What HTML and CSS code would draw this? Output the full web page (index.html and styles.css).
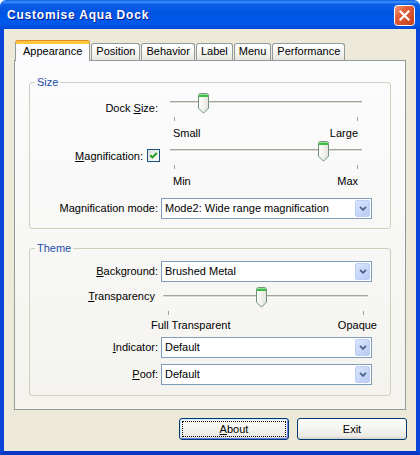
FILE: index.html
```html
<!DOCTYPE html>
<html lang="en">

<head>
    <meta charset="UTF-8">
    <meta name="viewport" content="width=device-width, initial-scale=1.0">
    <title>Customise Aqua Dock</title>
    <link rel="stylesheet" href="styles.css">
</head>

<body>
    <div class="window">
        <!-- title bar -->
        <div class="titlebar">
            <span class="title">Customise Aqua Dock</span>
            <a href="javascript:;" class="close-btn">
                <svg width="21" height="21" viewBox="0 0 21 21">
                    <defs>
                        <linearGradient id="close-bg" x1="0" y1="0" x2="1" y2="1">
                            <stop offset="0" stop-color="#f1a187" />
                            <stop offset=".35" stop-color="#e3603a" />
                            <stop offset="1" stop-color="#c23c18" />
                        </linearGradient>
                    </defs>
                    <rect x=".5" y=".5" width="20" height="20" rx="3" fill="url(#close-bg)" stroke="#fff" />
                    <path d="M6.5 6.5L14.5 14.5M14.5 6.5L6.5 14.5" stroke="#fff" stroke-width="2.2" stroke-linecap="square" />
                </svg>
            </a>
        </div>

        <div class="frame">
            <ul class="tabs">
                <li class="tab active">Appearance</li>
                <li class="tab">Position</li>
                <li class="tab">Behavior</li>
                <li class="tab">Label</li>
                <li class="tab">Menu</li>
                <li class="tab">Performance</li>
            </ul>

            <div class="panel">
                <!-- Size -->
                <fieldset class="group group-size">
                    <legend>Size</legend>

                    <div class="row row-slider">
                        <label class="row-label">Dock <u>S</u>ize:</label>
                        <div class="slider">
                            <div class="track-area">
                                <div class="track"></div>
                                <span class="thumb" style="left: 28px">
                                    <svg width="11" height="21" viewBox="0 0 11 21">
                                        <defs>
                                            <linearGradient id="thumb-bg" x1="0" x2="1">
                                                <stop offset="0" stop-color="#ffffff" />
                                                <stop offset="1" stop-color="#e4e4dc" />
                                            </linearGradient>
                                        </defs>
                                        <path d="M.5 2.5Q.5 .5 2.5 .5H8.5Q10.5 .5 10.5 2.5V15.2L5.5 20.2L.5 15.2Z" fill="url(#thumb-bg)" stroke="#72917a" />
                                        <rect x="1" y="1" width="9" height="1" fill="#95e395" />
                                        <rect x="1" y="2" width="9" height="2" fill="#3fb947" />
                                    </svg>
                                </span>
                            </div>
                            <div class="ticks"><i></i><i></i></div>
                            <div class="scale"><span>Small</span><span>Large</span></div>
                        </div>
                    </div>

                    <div class="row row-slider row-magnify">
                        <label class="row-label">
                            <u>M</u>agnification:
                        </label>
                        <span class="checkbox">
                            <svg width="13" height="13" viewBox="0 0 13 13">
                                <defs>
                                    <linearGradient id="check-bg" x1="0" y1="0" x2="1" y2="1">
                                        <stop offset="0" stop-color="#dcdcd7" />
                                        <stop offset="1" stop-color="#ffffff" />
                                    </linearGradient>
                                </defs>
                                <rect x=".5" y=".5" width="12" height="12" fill="url(#check-bg)" stroke="#1c5180" />
                                <path d="M3.2 6.2L5.4 8.4L9.8 4" fill="none" stroke="#21a121" stroke-width="2" />
                            </svg>
                        </span>
                        <div class="slider">
                            <div class="track-area">
                                <div class="track"></div>
                                <span class="thumb" style="left: 148px">
                                    <svg width="11" height="21" viewBox="0 0 11 21">
                                        <path d="M.5 2.5Q.5 .5 2.5 .5H8.5Q10.5 .5 10.5 2.5V15.2L5.5 20.2L.5 15.2Z" fill="url(#thumb-bg)" stroke="#72917a" />
                                        <rect x="1" y="1" width="9" height="1" fill="#95e395" />
                                        <rect x="1" y="2" width="9" height="2" fill="#3fb947" />
                                    </svg>
                                </span>
                            </div>
                            <div class="ticks"><i></i><i></i></div>
                            <div class="scale"><span>Min</span><span>Max</span></div>
                        </div>
                    </div>

                    <div class="row row-select row-mode">
                        <label class="row-label">Ma<u>g</u>nification mode:</label>
                        <div class="select">
                            <span class="select-text">Mode2: Wide range magnification</span>
                            <span class="select-btn">
                                <svg width="8" height="5" viewBox="0 0 8 5">
                                    <path d="M1 .8L4 3.8L7 .8" fill="none" stroke="#4d6185" stroke-width="1.8" />
                                </svg>
                            </span>
                        </div>
                    </div>
                </fieldset>

                <!-- Theme -->
                <fieldset class="group group-theme">
                    <legend>Theme</legend>

                    <div class="row row-select row-bg">
                        <label class="row-label"><u>B</u>ackground:</label>
                        <div class="select">
                            <span class="select-text">Brushed Metal</span>
                            <span class="select-btn">
                                <svg width="8" height="5" viewBox="0 0 8 5">
                                    <path d="M1 .8L4 3.8L7 .8" fill="none" stroke="#4d6185" stroke-width="1.8" />
                                </svg>
                            </span>
                        </div>
                    </div>

                    <div class="row row-slider row-alpha">
                        <label class="row-label"><u>T</u>ransparency</label>
                        <div class="slider">
                            <div class="track-area">
                                <div class="track"></div>
                                <span class="thumb" style="left: 93px">
                                    <svg width="11" height="21" viewBox="0 0 11 21">
                                        <path d="M.5 2.5Q.5 .5 2.5 .5H8.5Q10.5 .5 10.5 2.5V15.2L5.5 20.2L.5 15.2Z" fill="url(#thumb-bg)" stroke="#72917a" />
                                        <rect x="1" y="1" width="9" height="1" fill="#95e395" />
                                        <rect x="1" y="2" width="9" height="2" fill="#3fb947" />
                                    </svg>
                                </span>
                            </div>
                            <div class="ticks"><i></i><i></i></div>
                            <div class="scale"><span>Full Transparent</span><span>Opaque</span></div>
                        </div>
                    </div>

                    <div class="row row-select row-indicator">
                        <label class="row-label"><u>I</u>ndicator:</label>
                        <div class="select">
                            <span class="select-text">Default</span>
                            <span class="select-btn">
                                <svg width="8" height="5" viewBox="0 0 8 5">
                                    <path d="M1 .8L4 3.8L7 .8" fill="none" stroke="#4d6185" stroke-width="1.8" />
                                </svg>
                            </span>
                        </div>
                    </div>

                    <div class="row row-select row-poof">
                        <label class="row-label"><u>P</u>oof:</label>
                        <div class="select">
                            <span class="select-text">Default</span>
                            <span class="select-btn">
                                <svg width="8" height="5" viewBox="0 0 8 5">
                                    <path d="M1 .8L4 3.8L7 .8" fill="none" stroke="#4d6185" stroke-width="1.8" />
                                </svg>
                            </span>
                        </div>
                    </div>
                </fieldset>
            </div>

            <div class="buttons">
                <button class="btn btn-default"><u>A</u>bout</button>
                <button class="btn">Exit</button>
            </div>
        </div>
    </div>
</body>

</html>
```

FILE: styles.css
```css
html,
body,
ul,
li,
fieldset,
legend {
    margin: 0px;
    padding: 0px;
}

body {
    background: #fff;
    font-family: "Liberation Sans", Arial, sans-serif;
    font-size: 11px;
    color: #000;
    overflow: hidden;
}

.window {
    width: 420px;
    height: 455px;
}

/* 标题栏 */
.titlebar {
    display: flex;
    align-items: flex-start;
    height: 29px;
    border-radius: 6px 6px 0 0;
    background: linear-gradient(180deg, #0a5fe8 0%, #3d8ef8 7%, #0b5fe7 15%, #0054e3 45%, #0059ec 80%, #0048d6 100%);
}

.title {
    margin: 8px 0 0 7px;
    line-height: 15px;
    font-size: 12px;
    font-weight: bold;
    letter-spacing: .8px;
    color: #fff;
    text-shadow: 1px 1px 0 #0a1c8a;
}

.close-btn {
    display: block;
    width: 21px;
    height: 21px;
    margin: 5px 5px 0 auto;
}

.close-btn svg {
    display: block;
}

.frame {
    height: 426px;
    box-sizing: border-box;
    padding: 12px 10px 0 10px;
    background: #ece9d8;
    border: 4px solid #0845d8;
    border-top: 0;
    border-bottom-color: #0736c2;
}

/* 选项卡 */
.tabs {
    display: flex;
    align-items: flex-end;
    height: 19px;
    padding-left: 1px;
    list-style: none;
}

.tab {
    height: 17px;
    box-sizing: border-box;
    padding: 0 4px;
    margin-right: 1px;
    line-height: 15px;
    border: 1px solid #919b9c;
    border-bottom: 0;
    border-radius: 3px 3px 0 0;
    background: linear-gradient(#ffffff, #f3f3ef 60%, #e6e5dd);
}

.tab.active {
    position: relative;
    z-index: 1;
    height: 20px;
    margin-bottom: -1px;
    padding: 0 7px;
    line-height: 14px;
    border-top: 3px solid #ffc73c;
    box-shadow: 0 -1px 0 #e68b2c;
    background: #fcfcfe;
}

.panel {
    height: 350px;
    box-sizing: border-box;
    border: 1px solid #919b9c;
    background: linear-gradient(#fcfcfe, #f4f3ee);
}

/* 分组框 */
.group {
    margin: 15px 14px 0 14px;
    padding: 0 0 9px 0;
    border: 1px solid #d0d0bf;
    border-radius: 3px;
    min-width: 0;
}

.group legend {
    margin-left: 5px;
    padding: 0 2px;
    line-height: 13px;
    color: #1d4ea8;
}

.group-theme {
    margin-top: 13px;
    padding-bottom: 10px;
}

.row {
    display: flex;
    align-items: flex-start;
}

.row-label {
    width: 128px;
    flex-shrink: 0;
    text-align: right;
    line-height: 13px;
}

.row-slider .row-label {
    padding-top: 9px;
}

.row-select .row-label {
    padding-top: 4px;
}

/* 每一行之间的距离 */
.group-size .row-slider {
    margin-top: 4px;
}

.group-size .row-magnify {
    margin-top: 1px;
}

.row-mode {
    margin-top: 10px;
}

.row-bg {
    margin-top: 6px;
}

.row-alpha {
    margin-top: 5px;
}

.row-indicator {
    margin-top: 5px;
}

.row-poof {
    margin-top: 6px;
}

.row-magnify .row-label {
    width: 113px;
}

.checkbox {
    width: 13px;
    height: 13px;
    margin: 8px 0 0 4px;
}

.checkbox svg {
    display: block;
}

/* 滑块 */
.slider {
    width: 192px;
    margin-left: 12px;
}

.row-magnify .slider {
    margin-left: 10px;
}

.track-area {
    position: relative;
    height: 21px;
}

.track {
    position: relative;
    top: 8px;
    height: 3px;
    box-sizing: border-box;
    border-top: 1px solid #a3a39b;
    border-bottom: 1px solid #fff;
    border-radius: 1px;
    background: #dcdbd3;
}

.thumb {
    position: absolute;
    top: 0;
    width: 11px;
    height: 21px;
}

.thumb svg {
    display: block;
}

.ticks {
    display: flex;
    justify-content: space-between;
    height: 4px;
    margin-top: 3px;
    padding: 0 4px;
}

.ticks i {
    width: 1px;
    background: #a0a0a0;
}

.scale {
    display: flex;
    justify-content: space-between;
    margin-top: 6px;
    padding: 0 4px 0 3px;
    line-height: 13px;
}

.row-alpha .row-label {
    width: 125px;
    padding-top: 3px;
}

.row-alpha .slider {
    width: 205px;
    margin-left: 8px;
}

.row-alpha .ticks {
    padding: 0 4px 0 5px;
}

.row-alpha .scale {
    margin: 4px -9px 0 -12px;
    padding: 0;
}

/* 下拉框 */
.select {
    display: flex;
    align-items: center;
    width: 211px;
    height: 21px;
    box-sizing: border-box;
    margin-left: 3px;
    padding-left: 3px;
    border: 1px solid #7f9db9;
    background: #fff;
}

.select-text {
    flex: 1;
    line-height: 13px;
    white-space: nowrap;
}

.select-btn {
    display: flex;
    align-items: center;
    justify-content: center;
    width: 15px;
    height: 17px;
    box-sizing: border-box;
    margin-right: 1px;
    border: 1px solid #bccff7;
    border-radius: 2px;
    background: linear-gradient(135deg, #dae5fd, #b8cbf6);
}

/* 底部按钮 */
.buttons {
    display: flex;
    justify-content: flex-end;
    gap: 8px;
    margin: 8px -1px 0 0;
}

.btn {
    width: 110px;
    height: 22px;
    box-sizing: border-box;
    padding: 0;
    border: 1px solid #003c74;
    border-radius: 3px;
    font-family: inherit;
    font-size: 11px;
    color: #000;
    background: linear-gradient(#ffffff 0%, #f5f4f0 45%, #ecebe6 85%, #d6d0c5 100%);
}

.btn-default {
    box-shadow: inset 1px 1px 0 #cee7ff, inset -1px -1px 0 #6982ee;
    outline: 1px dotted #000;
    outline-offset: -4px;
}
```
